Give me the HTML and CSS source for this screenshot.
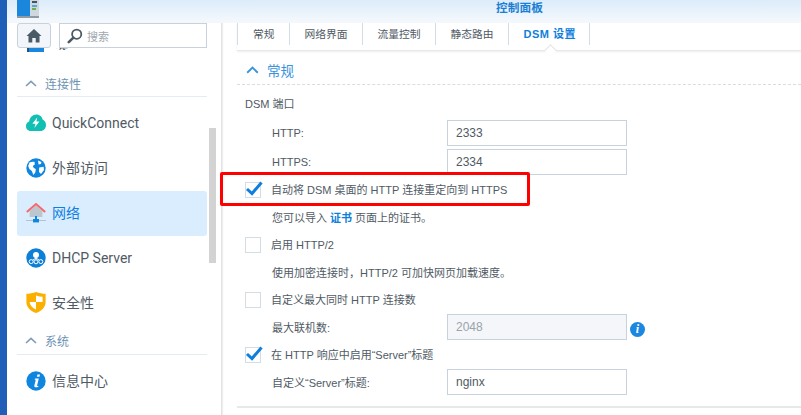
FILE: index.html

```html
<!DOCTYPE html>
<html lang="zh-CN">
<head>
  <meta charset="UTF-8" />
  <title>控制面板</title>
  <link rel="stylesheet" href="styles.css">
</head>
<body>
<div class="desktop">
  <div class="window">
    <header class="titlebar">
      <svg class="app-icon" width="23" height="18" viewBox="0 0 23 18">
        <rect x="0" y="0" width="13" height="16" fill="#1a87dc"/>
        <rect x="13" y="0" width="9" height="16" fill="#cfd8de"/>
        <rect x="15" y="1" width="5" height="2" fill="#3f5563"/>
        <rect x="15" y="5" width="5" height="2" fill="#5aa5d8"/>
        <rect x="15" y="8" width="4" height="2" fill="#6bb24a"/>
        <rect x="0" y="16" width="22" height="2" fill="#8f9aa3"/>
      </svg>
      <span class="title">控制面板</span>
    </header>
    <div class="columns">
      <aside class="sidebar">
        <div class="toolbar">
          <button class="home">
            <svg width="16" height="15" viewBox="0 0 16 15"><path d="M8 1 L15.5 8 L13.5 8 L13.5 14.5 L9.7 14.5 L9.7 10 L6.3 10 L6.3 14.5 L2.5 14.5 L2.5 8 L.5 8 Z" fill="#4a5a66"/></svg>
          </button>
          <div class="search">
            <svg width="16" height="16" viewBox="0 0 16 16"><circle cx="9.7" cy="6.2" r="4.6" fill="none" stroke="#4a5a66" stroke-width="1.8"/><path d="M6.4 9.6 L1.8 14.2" stroke="#4a5a66" stroke-width="2.6" stroke-linecap="round"/></svg>
            <span>搜索</span>
          </div>
        </div>
        <div class="nav-clip">
          <nav class="nav">
            <a class="item">
              <svg class="icon" width="20" height="20" viewBox="0 0 20 20"><rect x="3" y="14" width="15" height="6" fill="#1a87dc"/><rect x="1" y="14" width="2" height="6" fill="#27527a"/></svg>
              <span>域/LDAP</span>
            </a>
            <div class="group">
              <svg width="12" height="7" viewBox="0 0 12 7"><path d="M1 6 L6 1.3 L11 6" fill="none" stroke="#7f9db8" stroke-width="1.6"/></svg>
              <span>连接性</span>
            </div>
            <a class="item">
              <svg class="icon" width="20" height="18" viewBox="0 0 20 18"><path d="M5 17 C1.5 17 0 14.6 0 12 C0 9.6 1.6 8 3.2 7.6 C3.6 3.4 6.6 .5 10.4 .5 C13.8 .5 16.2 2.8 16.8 5.8 C18.8 6.6 20 8.6 20 11 C20 14.4 17.6 17 14.6 17 Z" fill="#11bfb3"/><path d="M11.2 3.6 L6.4 9.8 L9.4 9.8 L8.4 14 L13.4 7.6 L10.4 7.6 Z" fill="#fff"/></svg>
              <span>QuickConnect</span>
            </a>
            <a class="item">
              <svg class="icon" width="20" height="20" viewBox="0 0 20 20"><circle cx="10" cy="10" r="9.7" fill="#0e86e0"/><path d="M3.4 4.6 C5 3.8 7 3.4 8.6 4 L8.8 6.4 L6.8 8 L7.8 10 L9.8 11 L9.4 14.2 L7.4 17 L5.8 13 L3.4 11 L2.2 8 Z M12 2.6 L15.4 4 L15 6 L12.6 6.4 Z M13.2 9.4 L17.6 8.8 L18 12 L15 16 L13 14 Z" fill="#fff"/></svg>
              <span class="zh">外部访问</span>
            </a>
            <a class="item active">
              <svg class="icon" width="20" height="20" viewBox="0 0 20 20"><path d="M3.6 8 L10 2.4 L16.4 8 L16.4 14 L3.6 14 Z" fill="#bcc6ce"/><path d="M.8 9 L10 1 L19.2 9" fill="none" stroke="#f56a6a" stroke-width="2"/><rect x="0" y="17" width="20" height="1" fill="#b9c2c9"/><rect x="9" y="13" width="2" height="3" fill="#0e86e0"/><rect x="7" y="16" width="6" height="3.4" fill="#0e86e0"/></svg>
              <span class="zh">网络</span>
            </a>
            <a class="item">
              <svg class="icon" width="20" height="20" viewBox="0 0 20 20"><circle cx="10" cy="10" r="9.7" fill="#0e7fd6"/><circle cx="10" cy="7" r="3" fill="#fff"/><path d="M10 8 L10 12 M10 10 L5.5 13 M10 10 L14.5 13" stroke="#fff"/><circle cx="5.2" cy="13.6" r="2" fill="#0e7fd6" stroke="#fff"/><circle cx="10" cy="13.8" r="2" fill="#0e7fd6" stroke="#fff"/><circle cx="14.8" cy="13.6" r="2" fill="#0e7fd6" stroke="#fff"/></svg>
              <span>DHCP Server</span>
            </a>
            <a class="item">
              <svg class="icon" width="20" height="21" viewBox="0 0 20 21"><path d="M10 0 C13 1.2 16.6 1.8 19.6 1.8 L19.6 10 C19.6 15 15.6 19 10 21 C4.4 19 .4 15 .4 10 L.4 1.8 C3.4 1.8 7 1.2 10 0 Z" fill="#fbb000"/><path d="M10 3.4 C12.4 4.2 14.6 4.6 16.6 4.8 L16.6 10 L10 10 Z M10 10 L3.6 10 C4 13.6 6.6 16.2 10 17.6 Z" fill="#fff"/></svg>
              <span class="zh">安全性</span>
            </a>
            <div class="group group-sys">
              <svg width="12" height="7" viewBox="0 0 12 7"><path d="M1 6 L6 1.3 L11 6" fill="none" stroke="#7f9db8" stroke-width="1.6"/></svg>
              <span>系统</span>
            </div>
            <a class="item">
              <svg class="icon" width="20" height="20" viewBox="0 0 20 20"><circle cx="10" cy="10" r="9.7" fill="#0e86e0"/><path d="M11.4 3.4 h2.6 l-.5 2.4 h-2.6 Z M9 7.6 h3.8 l-1.7 7 c-.1 .5 .3 .6 1.4 .2 l-.2 1 c-1.2 .6 -4.4 1.2 -4 -1 l1.3 -5.4 c.1 -.6 -.3 -.8 -.9 -.8 Z" fill="#fff"/></svg>
              <span class="zh">信息中心</span>
            </a>
          </nav>
        </div>
        <div class="scrollbar"></div>
      </aside>
      <main class="panel">
        <div class="tabs">
          <a class="tab">常规</a>
          <a class="tab">网络界面</a>
          <a class="tab">流量控制</a>
          <a class="tab">静态路由</a>
          <a class="tab current">DSM 设置</a>
        </div>
        <div class="section-head">
          <svg width="13" height="8" viewBox="0 0 13 8"><path d="M1.2 6.8 L6.5 1.6 L11.8 6.8" fill="none" stroke="#3a94dc" stroke-width="1.9"/></svg>
          <span>常规</span>
        </div>
        <div class="content">
          <div class="sub">DSM 端口</div>
          <div class="field">
            <label>HTTP:</label>
            <input class="input" value="2333">
          </div>
          <div class="field">
            <label>HTTPS:</label>
            <input class="input" value="2334">
          </div>
          <div class="check">
            <span class="box"><svg width="20" height="17" viewBox="0 0 20 17"><path d="M3 9 L8 13.5 L17.5 2.5" fill="none" stroke="#0f7fdc" stroke-width="3"/></svg></span>
            <span>自动将 DSM 桌面的 HTTP 连接重定向到 HTTPS</span>
          </div>
          <div class="note">您可以导入 <a class="link">证书</a> 页面上的证书。</div>
          <div class="check">
            <span class="box"></span>
            <span>启用 HTTP/2</span>
          </div>
          <div class="note">使用加密连接时，HTTP/2 可加快网页加载速度。</div>
          <div class="check">
            <span class="box"></span>
            <span>自定义最大同时 HTTP 连接数</span>
          </div>
          <div class="field">
            <label>最大联机数:</label>
            <input class="input off" value="2048" disabled>
            <span class="info">i</span>
          </div>
          <div class="check">
            <span class="box"><svg width="20" height="17" viewBox="0 0 20 17"><path d="M3 9 L8 13.5 L17.5 2.5" fill="none" stroke="#0f7fdc" stroke-width="3"/></svg></span>
            <span>在 HTTP 响应中启用“Server”标题</span>
          </div>
          <div class="field">
            <label>自定义“Server”标题:</label>
            <input class="input" value="nginx">
          </div>
        </div>
        <div class="bottom-rule"></div>
        <div class="redbox"></div>
      </main>
    </div>
  </div>
</div>
</body>
</html>
```

FILE: styles.css

```css
* {
  box-sizing: border-box;
}
html, body {
  margin: 0;
  height: 100%;
  overflow: hidden;
}
body {
  font-family: "Liberation Sans", "Noto Sans CJK SC", sans-serif;
  font-size: 12px;
  color: #505a64;
  background: #fff;
}
.desktop {
  height: 415px;
  padding-left: 7px;
  background: linear-gradient(90deg, #1f5fb8, #2a70d0);
}
.window {
  height: 415px;
  background: #fff;
  display: flex;
  flex-direction: column;
}
.titlebar {
  height: 23px;
  flex: none;
  background: linear-gradient(#dcecfa, #f5f9fd);
  display: flex;
  justify-content: center;
  position: relative;
}
.app-icon {
  position: absolute;
  left: 10px;
  top: 0;
}
.title {
  color: #1a7fd4;
  font-size: 11.7px;
  line-height: 15px;
  font-weight: bold;
  margin-left: 231px;
}
.columns {
  flex: 1;
  display: flex;
  min-height: 0;
}
.sidebar {
  width: 215px;
  flex: none;
  position: relative;
  padding: 0 14px 0 10px;
  border-right: 1px solid #e3e3e3;
  box-shadow: 1px 0 1px #eee;
  display: flex;
  flex-direction: column;
}
.toolbar {
  display: flex;
  gap: 8px;
  height: 25px;
  flex: none;
  background: #fff;
}
.home {
  width: 36px;
  height: 25px;
  padding: 0;
  background: #f2f5f9;
  border: 1px solid #c8d2dc;
  border-radius: 3px;
  display: flex;
  align-items: center;
  justify-content: center;
}
.search {
  width: 148px;
  height: 25px;
  flex: none;
  border: 1px solid #c8d2dc;
  display: flex;
  align-items: center;
  gap: 4px;
  padding-left: 7px;
  font-size: 11px;
  color: #a0a8b0;
}
.nav-clip {
  flex: 1;
  overflow: hidden;
  min-height: 0;
}
.nav {
  margin-top: -28px;
}
.item {
  height: 45px;
  display: flex;
  align-items: center;
  gap: 6px;
  padding: 0 0 2px 9px;
  font-family: Roboto, "Noto Sans CJK SC", sans-serif;
  font-size: 14px;
  color: #505a64;
  border-radius: 3px;
}
.item .icon {
  width: 20px;
  flex: none;
}
.item .zh {
  margin-bottom: 2px;
}
.item.active {
  background: #d9edfe;
  color: #0e7fe0;
}
.group {
  height: 32px;
  margin-bottom: 4px;
  padding: 6px 0 0 8px;
  border-bottom: 1px solid #e6ebf0;
  display: flex;
  align-items: center;
  gap: 8px;
  color: #6d92b3;
  font-size: 12px;
}
.group-sys {
  height: 29px;
  padding-top: 0;
}
.scrollbar {
  position: absolute;
  left: 202px;
  top: 105px;
  width: 7px;
  height: 135px;
  background: #d3d3d3;
}
.panel {
  flex: 1;
  position: relative;
  min-width: 0;
  padding-left: 15px;
}
.tabs {
  height: 28px;
  display: flex;
  align-items: flex-start;
  border-bottom: 1px solid #e8e8e8;
  box-shadow: 0 1px 2px #eee;
}
.tab {
  height: 22px;
  padding: 0 14px 0 15px;
  line-height: 22px;
  font-size: 10.75px;
  color: #505a64;
  border-left: 1px solid #d3dde6;
}
.tab.current {
  position: relative;
  padding-right: 13px;
  font-size: 11px;
  letter-spacing: .5px;
  color: #0f7fdc;
  font-weight: bold;
  border-right: 1px solid #d3dde6;
}
.tab.current::after {
  content: "";
  position: absolute;
  left: 37px;
  top: 23px;
  width: 8px;
  height: 8px;
  background: #fff;
  border-top: 1px solid #e2e2e2;
  border-left: 1px solid #e2e2e2;
  transform: rotate(45deg);
}
.section-head {
  height: 33px;
  margin-top: 1px;
  padding: 4px 0 0 9px;
  border-bottom: 1px dashed #dcdcdc;
  display: flex;
  align-items: center;
  gap: 8px;
  color: #3a94dc;
  font-size: 13.5px;
}
.content {
  padding-left: 8px;
}
.sub {
  padding-top: 10px;
  height: 33px;
  font-size: 11px;
}
.field {
  display: flex;
  align-items: center;
  height: 28px;
  padding-left: 27px;
  font-size: 11px;
}
.sub + .field,
.sub + .field + .field {
  height: 29px;
}
.field label {
  width: 175px;
}
.input {
  width: 180px;
  height: 26px;
  padding: 0 8px;
  border: 1px solid #c8d2dc;
  font-family: inherit;
  font-size: 12px;
  color: #505a64;
  background: #fff;
}
.input.off {
  background: #f4f6f9;
  color: #9aa3ab;
}
.info {
  width: 15px;
  height: 15px;
  border-radius: 50%;
  margin: 4px 0 0 3px;
  background: #1a87e0;
  color: #fff;
  font: italic bold 12px/15px "Liberation Serif", serif;
  text-align: center;
}
.check {
  display: flex;
  align-items: center;
  gap: 10px;
  height: 27px;
  font-size: 11px;
}
.check > span:last-child {
  margin-bottom: 1px;
}
.box {
  width: 16px;
  height: 16px;
  flex: none;
  border: 1px solid #d3dde6;
  position: relative;
}
.box svg {
  position: absolute;
  left: -2px;
  top: -3px;
}
.note {
  height: 28px;
  line-height: 30px;
  padding-left: 27px;
  font-size: 11px;
}
.link {
  color: #0f7fdc;
  font-weight: bold;
}
.bottom-rule {
  height: 2px;
  margin-top: 10px;
  background: #e8e8e8;
}
.redbox {
  position: absolute;
  left: -2px;
  top: 149px;
  width: 310px;
  height: 34px;
  border: 3px solid #f00;
  border-radius: 2px;
}
```
